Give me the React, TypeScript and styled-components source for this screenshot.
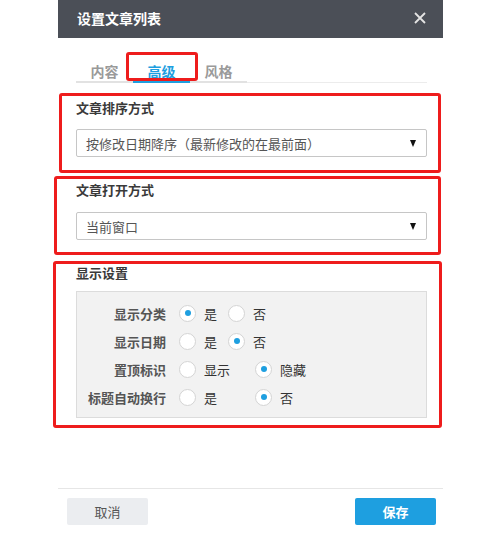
import React from "react";
import styled, { createGlobalStyle } from "styled-components";

const GlobalStyle = createGlobalStyle`
  html, body { margin: 0; padding: 0; background: #ffffff; }
  body { font-family: "Noto Sans CJK SC", "Noto Sans", sans-serif; }
  * { box-sizing: border-box; }
`;

const BLUE = "#1e9fe0";
const RED = "#ee1c1c";

const Dialog = styled.div`
  margin-left: 58px;
  width: 385px;
  height: 540px;
  display: flex;
  flex-direction: column;
  background: #fff;
`;

const Header = styled.div`
  height: 38px;
  background: #4b4f57;
  display: flex;
  align-items: center;
  justify-content: space-between;
  padding: 0 17px 3px 19px;
`;

const Title = styled.div`
  color: #fff;
  font-size: 14px;
  font-weight: 700;
  line-height: 20px;
`;

const CloseBtn = styled.div`
  width: 12px;
  height: 12px;
  display: flex;
  color: #e4e4e4;
`;

const Body = styled.div`
  flex: 1;
  display: flex;
  flex-direction: column;
`;

const TabBar = styled.div`
  display: flex;
  margin: 23px 16px 0 18px;
  border-bottom: 1px solid #ececec;
`;

const Tab = styled.div<{ $active?: boolean }>`
  position: relative;
  width: 57px;
  text-align: center;
  font-size: 14px;
  font-weight: 700;
  line-height: 20px;
  color: ${(p) => (p.$active ? BLUE : "#9a9a9a")};
  border-bottom: 2px solid ${(p) => (p.$active ? BLUE : "#e2e2e2")};
  margin-bottom: -1px;
`;

const Mark = styled.div`
  position: absolute;
  left: -7px;
  right: -8px;
  top: -9px;
  bottom: 0;
  border: 3px solid ${RED};
  border-radius: 3px;
  pointer-events: none;
`;

const Section = styled.div<{ $left: number; $right: number; $top: number; $pt: number; $pb: number }>`
  margin: ${(p) => p.$top}px ${(p) => p.$right}px 0 ${(p) => p.$left}px;
  border: 3px solid ${RED};
  border-radius: 3px;
  padding: ${(p) => p.$pt}px ${(p) => 16 - p.$right - 3}px ${(p) => p.$pb}px
    ${(p) => 18 - p.$left - 3}px;
`;

const Heading = styled.div`
  font-size: 13px;
  font-weight: 700;
  line-height: 18px;
  color: #3a3a3a;
`;

const Select = styled.div<{ $gap: number }>`
  margin-top: ${(p) => p.$gap}px;
  height: 28px;
  border: 1px solid #c6c6c6;
  border-radius: 2px;
  display: flex;
  align-items: center;
  justify-content: space-between;
  padding: 0 8px 0 9px;
  font-size: 13px;
  color: #555;
`;

const Arrow = styled.span`
  width: 0;
  height: 0;
  border-left: 3.5px solid transparent;
  border-right: 3.5px solid transparent;
  border-top: 7px solid #111;
  margin-right: 2px;
`;

const Panel = styled.div`
  margin-top: 9px;
  background: #f2f2f2;
  border: 1px solid #dcdcdc;
  padding: 7px 0 6px 0;
  display: flex;
  flex-direction: column;
`;

const Row = styled.div`
  height: 28px;
  display: flex;
  align-items: center;
`;

const Label = styled.div`
  width: 89px;
  margin-right: 13px;
  text-align: right;
  font-size: 13px;
  font-weight: 700;
  color: #555;
`;

const Option = styled.label<{ $width?: number }>`
  display: flex;
  align-items: center;
  width: ${(p) => (p.$width ? `${p.$width}px` : "auto")};
  font-size: 13px;
  color: #333;
`;

const Radio = styled.span<{ $checked?: boolean }>`
  width: 17px;
  height: 17px;
  border-radius: 50%;
  background: #fff;
  border: 1px solid #d4d4d4;
  display: flex;
  align-items: center;
  justify-content: center;
  margin-right: 8px;
  &::after {
    content: "";
    width: 6px;
    height: 6px;
    border-radius: 50%;
    background: ${BLUE};
    display: ${(p) => (p.$checked ? "block" : "none")};
  }
`;

const Footer = styled.div`
  border-top: 1px solid #e6e6e6;
  height: 52px;
  display: flex;
  justify-content: space-between;
  padding: 9px 7px 0 9px;
`;

const Button = styled.div<{ $primary?: boolean }>`
  width: 81px;
  height: 27px;
  border-radius: 2px;
  display: flex;
  align-items: center;
  justify-content: center;
  font-size: 13px;
  font-weight: ${(p) => (p.$primary ? 700 : 400)};
  background: ${(p) => (p.$primary ? BLUE : "#ebedf0")};
  color: ${(p) => (p.$primary ? "#fff" : "#555")};
`;

type Opt = { text: string; checked?: boolean; width?: number };
const rows: { label: string; opts: Opt[] }[] = [
  { label: "显示分类", opts: [{ text: "是", checked: true, width: 49 }, { text: "否" }] },
  { label: "显示日期", opts: [{ text: "是", width: 49 }, { text: "否", checked: true }] },
  { label: "置顶标识", opts: [{ text: "显示", width: 76 }, { text: "隐藏", checked: true }] },
  { label: "标题自动换行", opts: [{ text: "是", width: 76 }, { text: "否", checked: true }] },
];

export default function App() {
  return (
    <>
      <GlobalStyle />
      <Dialog>
        <Header>
          <Title>设置文章列表</Title>
          <CloseBtn>
            <svg width="12" height="12" viewBox="0 0 12 12">
              <path d="M1 1 L11 11 M11 1 L1 11" stroke="currentColor" strokeWidth="1.8" />
            </svg>
          </CloseBtn>
        </Header>
        <Body>
          <TabBar>
            <Tab>内容</Tab>
            <Tab $active>
              高级
              <Mark />
            </Tab>
            <Tab>风格</Tab>
          </TabBar>
          <Section $left={1} $right={2} $top={10} $pt={3} $pb={13}>
            <Heading>文章排序方式</Heading>
            <Select $gap={12}>
              <span>按修改日期降序（最新修改的在最前面）</span>
              <Arrow />
            </Select>
          </Section>
          <Section $left={-4} $right={2} $top={3} $pt={2} $pb={12}>
            <Heading>文章打开方式</Heading>
            <Select $gap={13}>
              <span>当前窗口</span>
              <Arrow />
            </Select>
          </Section>
          <Section $left={-5} $right={1} $top={6} $pt={0} $pb={7}>
            <Heading>显示设置</Heading>
            <Panel>
              {rows.map((r) => (
                <Row key={r.label}>
                  <Label>{r.label}</Label>
                  {r.opts.map((o) => (
                    <Option key={o.text} $width={o.width}>
                      <Radio $checked={o.checked} />
                      {o.text}
                    </Option>
                  ))}
                </Row>
              ))}
            </Panel>
          </Section>
        </Body>
        <Footer>
          <Button>取消</Button>
          <Button $primary>保存</Button>
        </Footer>
      </Dialog>
    </>
  );
}
